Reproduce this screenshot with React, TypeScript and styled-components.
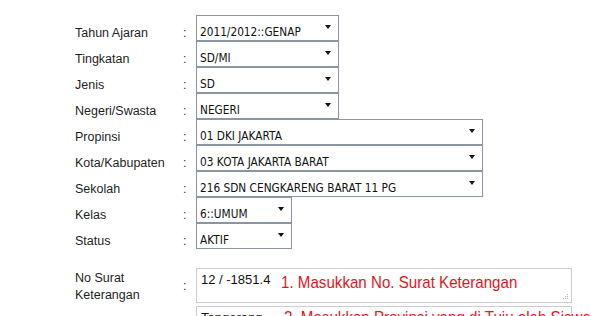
import React from "react";
import styled, { createGlobalStyle } from "styled-components";

const GlobalStyle = createGlobalStyle`
  html, body { margin: 0; padding: 0; background: #ffffff; }
  body { font-family: "Liberation Sans", Arial, sans-serif; color: #222; overflow: hidden; }
`;

const Form = styled.div`
  padding: 15px 0 0 75px;
  display: flex;
  flex-direction: column;
`;

const Row = styled.div<{ $h: number; $mt?: number }>`
  display: grid;
  grid-template-columns: 107px 14px max-content;
  height: ${(p) => p.$h}px;
  margin-top: ${(p) => p.$mt ?? 0}px;
`;

const Label = styled.div`
  font-size: 12.5px;
  line-height: 14px;
  color: #1e1e1e;
  align-self: end;
  padding-bottom: 1px;
`;

const MultiLabel = styled.div<{ $pt?: number }>`
  font-size: 12.5px;
  line-height: 17px;
  color: #1e1e1e;
  padding-top: ${(p) => p.$pt ?? 2}px;
  white-space: nowrap;
`;

const Colon = styled.div<{ $center?: boolean }>`
  font-size: 12.5px;
  line-height: 14px;
  color: #333;
  padding-left: 1px;
  align-self: ${(p) => (p.$center ? "center" : "end")};
  padding-bottom: 1px;
`;

const SelectBox = styled.div<{ $w: number }>`
  box-sizing: border-box;
  width: ${(p) => p.$w}px;
  height: 26px;
  border: 1px solid #8c96a3;
  background: #fff;
  display: flex;
  align-items: flex-end;
  justify-content: space-between;
  padding: 0 7px 0 3px;
`;

const SelectValue = styled.span`
  display: inline-block;
  font-family: "DejaVu Sans", sans-serif;
  font-size: 12px;
  line-height: 15px;
  color: #111;
  white-space: nowrap;
  transform: scaleX(0.88);
  transform-origin: left bottom;
`;

const Arrow = styled.span`
  align-self: center;
  width: 0;
  height: 0;
  margin-bottom: 2px;
  border-left: 3.5px solid transparent;
  border-right: 3.5px solid transparent;
  border-top: 4px solid #111;
`;

const TextBox = styled.div<{ $h: number }>`
  position: relative;
  box-sizing: border-box;
  width: 376px;
  height: ${(p) => p.$h}px;
  border: 1px solid #cdcdcd;
  background: #fff;
  padding: 3px 4px;
  font-size: 13px;
  line-height: 15px;
  color: #111;
`;

const Annotation = styled.div<{ $left: number; $top: number }>`
  position: absolute;
  display: inline-block;
  left: ${(p) => p.$left}px;
  top: ${(p) => p.$top}px;
  font-family: "Liberation Sans", Arial, sans-serif;
  font-size: 17px;
  line-height: 20px;
  color: #e3161d;
  white-space: nowrap;
  transform: scaleX(0.89);
  transform-origin: 0 0;
`;

const Grip = styled.svg`
  position: absolute;
  right: 2px;
  bottom: 2px;
`;

const selects: { label: string; value: string; w: number }[] = [
  { label: "Tahun Ajaran", value: "2011/2012::GENAP", w: 143 },
  { label: "Tingkatan", value: "SD/MI", w: 143 },
  { label: "Jenis", value: "SD", w: 143 },
  { label: "Negeri/Swasta", value: "NEGERI", w: 143 },
  { label: "Propinsi", value: "01 DKI JAKARTA", w: 287 },
  { label: "Kota/Kabupaten", value: "03 KOTA JAKARTA BARAT", w: 287 },
  { label: "Sekolah", value: "216 SDN CENGKARENG BARAT 11 PG", w: 287 },
  { label: "Kelas", value: "6::UMUM", w: 96 },
  { label: "Status", value: "AKTIF", w: 96 },
];

export default function App() {
  return (
    <>
      <GlobalStyle />
      <Form>
        {selects.map((s) => (
          <Row key={s.label} $h={26}>
            <Label>{s.label}</Label>
            <Colon>:</Colon>
            <SelectBox $w={s.w}>
              <SelectValue>{s.value}</SelectValue>
              <Arrow />
            </SelectBox>
          </Row>
        ))}
        <Row $h={35} $mt={19}>
          <MultiLabel>
            No Surat
            <br />
            Keterangan
          </MultiLabel>
          <Colon $center>:</Colon>
          <TextBox $h={35}>
            12 / -1851.4
            <Annotation $left={84} $top={4}>1. Masukkan No. Surat Keterangan</Annotation>
            <Grip width="6" height="6" viewBox="0 0 6 6">
              <rect x="4" y="0" width="1" height="1" fill="#b5b5b5" />
              <rect x="2" y="2" width="1" height="1" fill="#b5b5b5" />
              <rect x="4" y="2" width="1" height="1" fill="#b5b5b5" />
              <rect x="0" y="4" width="1" height="1" fill="#b5b5b5" />
              <rect x="2" y="4" width="1" height="1" fill="#b5b5b5" />
              <rect x="4" y="4" width="1" height="1" fill="#b5b5b5" />
            </Grip>
          </TextBox>
        </Row>
        <Row $h={35} $mt={3}>
          <MultiLabel $pt={9}>Propinsi Tujuan</MultiLabel>
          <Colon $center>:</Colon>
          <TextBox $h={35}>
            Tangerang
            <Annotation $left={87} $top={1}>2. Masukkan Provinsi yang di Tuju oleh Siswa</Annotation>
          </TextBox>
        </Row>
      </Form>
    </>
  );
}
